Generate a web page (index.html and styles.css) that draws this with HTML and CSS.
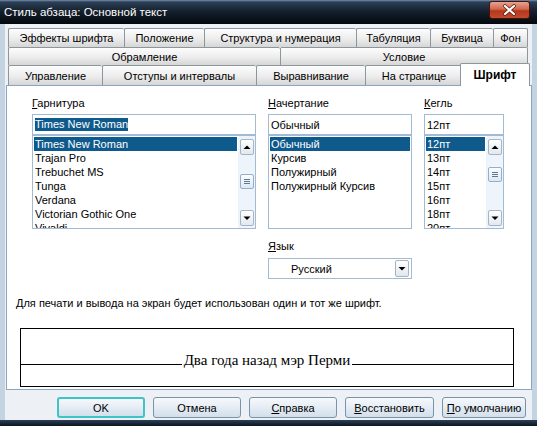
FILE: index.html
```html
<!DOCTYPE html>
<html>
<head>
  <meta charset="UTF-8">
  <title>Стиль абзаца: Основной текст</title>
  <link rel="stylesheet" href="styles.css">
</head>

<body>
<div class="window">
  <div class="titlebar">
    <span class="title">Стиль абзаца: Основной текст</span>
    <div class="close">
      <svg width="41" height="18" viewBox="0 0 41 18">
        <path d="M16 5 L25 13 M25 5 L16 13" stroke="#5a1a0c" stroke-width="3.6" stroke-linecap="round"/>
        <path d="M16 5 L25 13 M25 5 L16 13" stroke="#fff" stroke-width="2.2" stroke-linecap="round"/>
      </svg>
    </div>
  </div>

  <div class="client">
    <!-- tab strip, three rows -->
    <div class="tabs">
      <div class="tabrow row1">
        <div class="tab w116">Эффекты шрифта</div>
        <div class="tab w80">Положение</div>
        <div class="tab w152">Структура и нумерация</div>
        <div class="tab w74">Табуляция</div>
        <div class="tab w63">Буквица</div>
        <div class="tab w35 last">Фон</div>
      </div>
      <div class="tabrow row2">
        <div class="tab w272">Обрамление</div>
        <div class="tab w248 last">Условие</div>
      </div>
      <div class="tabrow row3">
        <div class="tab w94">Управление</div>
        <div class="tab w154">Отступы и интервалы</div>
        <div class="tab w109">Выравнивание</div>
        <div class="tab w97">На странице</div>
        <div class="tab active last">Шрифт</div>
      </div>
    </div>

    <div class="panel">
      <div class="fields">
        <div class="field family">
          <div class="label"><u>Г</u>арнитура</div>
          <div class="entry"><span class="picked">Times New Roman</span></div>
          <div class="list">
            <div class="items">
              <div class="item sel">Times New Roman</div>
              <div class="item">Trajan Pro</div>
              <div class="item">Trebuchet MS</div>
              <div class="item">Tunga</div>
              <div class="item">Verdana</div>
              <div class="item">Victorian Gothic One</div>
              <div class="item">Vivaldi</div>
            </div>
            <div class="scroll">
              <div class="sbtn"><svg width="12" height="14" viewBox="0 0 12 14"><path d="M2.5 9 L6 5.5 L9.5 9 Z" fill="#000"/></svg></div>
              <div class="thumb"><svg width="12" height="13" viewBox="0 0 12 13"><path d="M3 4.5 H9 M3 6.5 H9 M3 8.5 H9" stroke="#5b7897" stroke-width="1"/></svg></div>
              <div class="sbtn down"><svg width="12" height="14" viewBox="0 0 12 14"><path d="M2.5 5.5 L6 9 L9.5 5.5 Z" fill="#000"/></svg></div>
            </div>
          </div>
        </div>

        <div class="field typeface">
          <div class="label"><u>Н</u>ачертание</div>
          <div class="entry">Обычный</div>
          <div class="list">
            <div class="items">
              <div class="item sel">Обычный</div>
              <div class="item">Курсив</div>
              <div class="item">Полужирный</div>
              <div class="item">Полужирный Курсив</div>
            </div>
          </div>
        </div>

        <div class="field size">
          <div class="label"><u>К</u>егль</div>
          <div class="entry">12пт</div>
          <div class="list">
            <div class="items">
              <div class="item sel">12пт</div>
              <div class="item">13пт</div>
              <div class="item">14пт</div>
              <div class="item">15пт</div>
              <div class="item">16пт</div>
              <div class="item">18пт</div>
              <div class="item">20пт</div>
            </div>
            <div class="scroll">
              <div class="sbtn"><svg width="12" height="14" viewBox="0 0 12 14"><path d="M2.5 9 L6 5.5 L9.5 9 Z" fill="#000"/></svg></div>
              <div class="thumb high"><svg width="12" height="13" viewBox="0 0 12 13"><path d="M3 4.5 H9 M3 6.5 H9 M3 8.5 H9" stroke="#5b7897" stroke-width="1"/></svg></div>
              <div class="sbtn down"><svg width="12" height="14" viewBox="0 0 12 14"><path d="M2.5 5.5 L6 9 L9.5 5.5 Z" fill="#000"/></svg></div>
            </div>
          </div>
        </div>
      </div>

      <div class="lang">
        <div class="label lang-label"><u>Я</u>зык</div>
        <div class="combo">
          <span class="combo-text">Русский</span>
          <div class="sbtn combo-btn"><svg width="12" height="15" viewBox="0 0 12 15"><path d="M2.5 6 L6 9.5 L9.5 6 Z" fill="#000"/></svg></div>
        </div>
      </div>

      <p class="note">Для печати и вывода на экран будет использован один и тот же шрифт.</p>

      <div class="preview">
        <div class="sample-row">
          <span class="rule"></span>
          <span class="sample">Два года назад мэр Перми</span>
          <span class="rule"></span>
        </div>
      </div>
    </div>

    <div class="buttons">
      <div class="btn w88 focus">OK</div>
      <div class="btn w88">Отмена</div>
      <div class="btn w88"><u>С</u>правка</div>
      <div class="btn w89"><u>В</u>осстановить</div>
      <div class="btn w84"><u>П</u>о умолчанию</div>
    </div>
  </div>

  <div class="bottom-edge"></div>
</div>
</body>
</html>
```

FILE: styles.css
```css
/* dialog window */
body {
  margin: 0;
  font: 11px "Liberation Sans", Arial, sans-serif;
  color: #000;
}
.window {
  width: 537px;
  height: 426px;
  background: #c4d3e2;
  display: flex;
  flex-direction: column;
  overflow: hidden;
}

/* title bar */
.titlebar {
  flex: none;
  height: 24px;
  box-sizing: border-box;
  padding: 0 7px 0 4px;
  display: flex;
  justify-content: space-between;
  align-items: center;
  background: linear-gradient(#7590ad 0, #2c3f55 2px, #16222f 45%, #03070c 100%);
  color: #fff;
  font-size: 11.5px;
}
.close {
  align-self: flex-start;
  margin-top: 1px;
  width: 41px;
  height: 18px;
  box-sizing: border-box;
  border: 1px solid #4a1308;
  border-radius: 3px;
  background: linear-gradient(#e7a392 0, #d2664c 45%, #b4371f 55%, #c24a2c 100%);
  display: flex;
}
.close svg { margin: -1px; }

.client {
  flex: 1;
  margin: 0 5px;
  padding: 4px 0 0 1px;
  background: #edf1f6;
  display: flex;
  flex-direction: column;
}

/* tabs */
.tabs { padding-left: 2px; }
.tabrow { display: flex; }
.row1 { height: 19px; }
.row2 { height: 18px; }
.row3 { height: 20px; }
.tab {
  box-sizing: border-box;
  height: 100%;
  border-top: 1px solid #8c979b;
  border-left: 1px solid #8c979b;
  border-radius: 2px 2px 0 0;
  background: linear-gradient(#fdfdfd, #ececec 55%, #d6d6d6);
  display: flex;
  align-items: center;
  justify-content: center;
  white-space: nowrap;
}
.tab.last { border-right: 1px solid #8c979b; }
.w35 { width: 35px; }
.w63 { width: 63px; }
.w74 { width: 74px; }
.w80 { width: 80px; }
.w94 { width: 94px; }
.w97 { width: 97px; }
.w109 { width: 109px; }
.w116 { width: 116px; }
.w152 { width: 152px; }
.w154 { width: 154px; }
.w248 { width: 248px; }
.w272 { width: 272px; }
.tab.active {
  position: relative;
  z-index: 1;
  width: 70px;
  height: 23px;
  margin: -2px 0 -1px -2px;
  background: #fff;
  font-weight: bold;
  font-size: 12px;
  padding-bottom: 1px;
}

/* tab page */
.panel {
  height: 305px;
  box-sizing: border-box;
  border: 1px solid #89a5c2;
  background: #fff;
  padding-top: 10px;
}
.fields {
  display: flex;
  gap: 12px;
  margin-left: 25px;
}
.family { width: 224px; }
.typeface { width: 144px; }
.size { width: 80px; }
.label {
  height: 14px;
  line-height: 14px;
  margin-bottom: 4px;
}
.entry {
  box-sizing: border-box;
  height: 21px;
  border: 1px solid #a3bbd2;
  padding-left: 2px;
  display: flex;
  align-items: center;
  white-space: nowrap;
}
.picked {
  background: #0f5a8c;
  color: #fff;
  line-height: 13px;
}
.list {
  box-sizing: border-box;
  height: 94px;
  border: 1px solid #a3bbd2;
  display: flex;
}
.items {
  flex: 1;
  padding: 1px 1px 0;
  overflow: hidden;
}
.item {
  height: 14px;
  line-height: 14px;
  padding-left: 1px;
  white-space: nowrap;
}
.item.sel {
  background: #0f5a8c;
  color: #fff;
}

/* scrollbar */
.scroll {
  width: 17px;
  background: #edf4fb;
  display: flex;
  flex-direction: column;
  align-items: center;
  padding: 3px 0 2px;
}
.sbtn, .thumb {
  box-sizing: border-box;
  width: 14px;
  height: 16px;
  border: 1px solid #a7b4c2;
  border-radius: 2px;
  background: linear-gradient(#ffffff, #e2e8ef);
  display: flex;
}
.thumb {
  height: 15px;
  margin-top: 19px;
  border-color: #98aec6;
  background: linear-gradient(#fbfdff, #dde8f4);
}
.thumb.high { margin-top: 12px; }
.sbtn.down { margin-top: auto; }

/* language */
.lang {
  margin: 10px 0 0 261px;
  width: 144px;
}
.lang-label { margin-bottom: 5px; }
.combo {
  box-sizing: border-box;
  height: 21px;
  border: 1px solid #a3bbd2;
  display: flex;
  align-items: center;
  padding: 0 2px 0 22px;
}
.combo-text { flex: 1; }
.combo-btn { height: 17px; }

.note {
  margin: 17px 0 0 9px;
  line-height: 14px;
}

/* sample text */
.preview {
  box-sizing: border-box;
  width: 494px;
  height: 59px;
  margin: 18px 0 0 13px;
  border: 1px solid #000;
  padding-top: 23px;
}
.sample-row {
  display: flex;
  align-items: flex-end;
}
.rule {
  flex: 1;
  border-bottom: 1px solid #000;
  margin-bottom: 3px;
}
.sample {
  font: 15px/16px "Liberation Serif", "Times New Roman", serif;
  padding: 0 2px;
  white-space: nowrap;
}

/* buttons */
.buttons {
  display: flex;
  justify-content: flex-end;
  gap: 8px;
  padding: 7px 6px 0 0;
}
.btn {
  box-sizing: border-box;
  height: 21px;
  border: 1px solid #7a93ad;
  border-radius: 3px;
  background: linear-gradient(#f6f9fc, #e4ecf4 50%, #d3dfeb);
  display: flex;
  align-items: center;
  justify-content: center;
}
.w84 { width: 84px; }
.w88 { width: 88px; }
.w89 { width: 89px; }
.btn.focus {
  border: 2px solid #3fc3c6;
}

.bottom-edge {
  flex: none;
  height: 6px;
  background: linear-gradient(#2c4058, #0a1420);
}
```
